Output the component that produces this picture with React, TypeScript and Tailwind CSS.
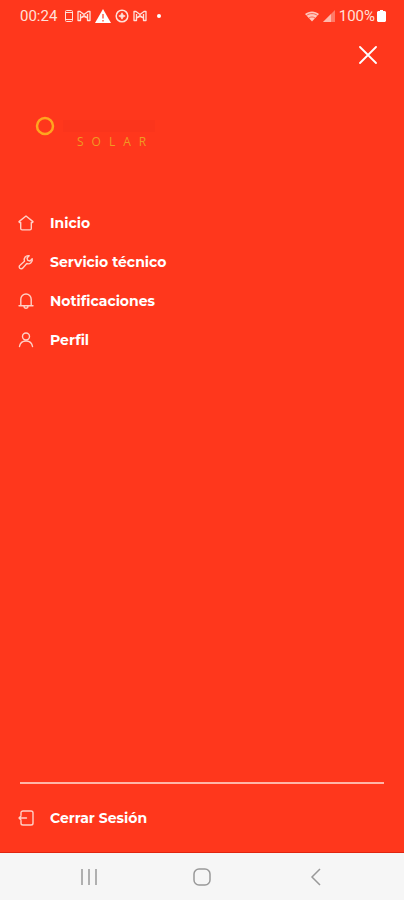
import type { ReactNode } from "react";

const menuItems = [
  { label: "Inicio", href: "#inicio", icon: <HomeIcon /> },
  { label: "Servicio técnico", href: "#servicio", icon: <WrenchIcon /> },
  { label: "Notificaciones", href: "#notificaciones", icon: <BellIcon /> },
  { label: "Perfil", href: "#perfil", icon: <UserIcon /> },
];

function LineIcon({ children }: { children: ReactNode }) {
  return (
    <svg
      viewBox="0 0 16 16"
      className="h-4 w-4 shrink-0 text-[#ffd0c6]"
      fill="none"
      stroke="currentColor"
      strokeWidth="1.4"
      strokeLinecap="round"
      strokeLinejoin="round"
      aria-hidden="true"
    >
      {children}
    </svg>
  );
}

function HomeIcon() {
  return (
    <LineIcon>
      <path d="M1 6.6 8 1l7 5.600-.4.9h-1.300v6c0 .9-.5 1.400-1.400 1.400H4.100c-.9 0-1.400-.5-1.400-1.400v-6H1.400z" />
    </LineIcon>
  );
}

function WrenchIcon() {
  return (
    <LineIcon>
      <path d="M11.200 1.800a4 4 0 0 0-4.700 5.400L2 11.200a2 2 0 1 0 2.800 2.800l4-4.500a4 4 0 0 0 5.400-4.700L12 7l-2.300-.7L9 4z" />
    </LineIcon>
  );
}

function BellIcon() {
  return (
    <LineIcon>
      <path d="M1 12.800h14M2.800 12.800V6.200a5.200 5.200 0 0 1 10.400 0v6.600M6 13.200c.2 2.700 3.800 2.700 4 0" />
    </LineIcon>
  );
}

function UserIcon() {
  return (
    <LineIcon>
      <circle cx="8" cy="4.500" r="3.500" />
      <path d="M1.500 14.500c.6-3.700 3-5.500 6.500-5.500s5.900 1.800 6.500 5.500" />
    </LineIcon>
  );
}

function LogoutIcon() {
  return (
    <LineIcon>
      <path d="M3 5V2.800C3 1.600 3.800 1 5 1h8c1.200 0 2 .6 2 1.800v10.400c0 1.200-.8 1.800-2 1.800H5c-1.200 0-2-.6-2-1.800V11" />
      <path d="M8.500 8H1M3 6 1 8l2 2" />
    </LineIcon>
  );
}

// Gmail style envelope
function MailIcon() {
  return (
    <svg viewBox="0 0 14 12" className="h-3 w-3.5" fill="none" stroke="currentColor" strokeWidth="1.3" strokeLinejoin="round" aria-hidden="true">
      <path d="M1 10.500v-9h2L7 4.500l4-3h2v9h-2.500V8L7 5.500 3.500 8v2.500z" />
      <path d="M3.500 4v4L7 6.500 10.500 8V4" />
    </svg>
  );
}

function StatusBar() {
  return (
    <div className="flex h-8 items-center justify-between pl-5 pr-[18px] text-[#ffe0d9]">
      <div className="flex items-center gap-1">
        <span className="mr-1 font-[Roboto,sans-serif] text-[15px]">00:24</span>
        <svg viewBox="0 0 8 12" className="h-3 w-2" fill="none" stroke="currentColor" aria-hidden="true">
          <rect x=".5" y=".5" width="7" height="11" rx="1" />
          <path d="M1 2.500h6M1 9.500h6" />
        </svg>
        <MailIcon />
        <svg viewBox="0 0 16 14" className="h-3.5 w-4 text-white" aria-hidden="true">
          <path d="M8 0 16 14H0z" fill="currentColor" />
          <path d="M8 5v4.500M8 11v1.500" stroke="#ff371c" strokeWidth="1.200" />
        </svg>
        <svg viewBox="0 0 14 14" className="h-3.5 w-3.5" fill="none" stroke="currentColor" strokeWidth="1.500" aria-hidden="true">
          <circle cx="7" cy="7" r="5.800" />
          <path d="M7 3.800 8 6l2.200 1L8 8l-1 2.200L6 8 3.800 7 6 6z" fill="currentColor" strokeWidth=".8" />
        </svg>
        <MailIcon />
        <span className="ml-1.5 h-1 w-1 rounded-full bg-white" />
      </div>
      <div className="flex items-center gap-1">
        <svg viewBox="0 0 14 11" className="h-3 w-3.5" aria-hidden="true">
          <path d="M0 3.500C4 0 10 0 14 3.500L7 11z" fill="currentColor" opacity=".85" />
          <path d="M1.500 5c3-2.500 8-2.500 11 0M4 7.500c1.800-1.400 4.200-1.400 6 0" fill="none" stroke="#ff371c" strokeWidth=".7" />
        </svg>
        <svg viewBox="0 0 12 12" className="h-3 w-3" fill="currentColor" aria-hidden="true">
          <path d="M0 12 12 0v12z" opacity=".4" />
          <path d="M0 12 8 4v8z" opacity=".6" />
        </svg>
        <div className="flex items-center gap-0.5">
          <span className="font-[Roboto,sans-serif] text-[15px]">100%</span>
          <svg viewBox="0 0 9 12" className="h-3 w-[9px] text-white" fill="currentColor" aria-hidden="true">
            <path d="M3 0h3v1h2l1 1v9l-1 1H1l-1-1V2l1-1h2z" />
          </svg>
        </div>
      </div>
    </div>
  );
}

function Logo() {
  return (
    <div className="flex gap-2 px-[35px]">
      <svg viewBox="0 0 20 20" className="h-5 w-5" fill="none" stroke="#ffa51f" strokeWidth="2.500" aria-hidden="true">
        <circle cx="10" cy="10" r="8" />
      </svg>
      <div>
        {/* tone-on-tone band above the name */}
        <div className="flex h-5 items-center">
          <div className="h-3 w-[92px] bg-[#fb351c]" />
        </div>
        <p className="pl-3.5 font-['Open_Sans',sans-serif] text-xs leading-3 tracking-[8px] text-[#f09a22]">SOLAR</p>
      </div>
    </div>
  );
}

export default function App() {
  return (
    <div className="flex min-h-screen flex-col bg-[#ff371c] font-[Montserrat,Inter,sans-serif] text-white">
      <StatusBar />
      <header className="flex flex-col">
        <button type="button" aria-label="Cerrar menú" className="mr-[23px] mt-2.5 self-end p-1">
          <svg viewBox="0 0 18 18" className="h-[18px] w-[18px]" fill="none" stroke="currentColor" strokeWidth="1.800" strokeLinecap="round" aria-hidden="true">
            <path d="m1 1 16 16M17 1 1 17" />
          </svg>
        </button>
        <div className="pt-12">
          <Logo />
        </div>
      </header>

      <nav className="mt-[65px] flex flex-1 flex-col gap-[19px] px-[18px]">
        {menuItems.map((item) => (
          <a key={item.label} href={item.href} className="flex items-center gap-4 text-sm font-bold">
            {item.icon}
            {item.label}
          </a>
        ))}
      </nav>

      <footer>
        <hr className="mx-5 border-t-2 border-[#ffb5a7]" />
        <button type="button" className="flex w-full items-center gap-4 px-[18px] py-6 text-sm font-bold">
          <LogoutIcon />
          Cerrar Sesión
        </button>
        <div className="flex h-12 items-center justify-around border-t border-[#e02510] bg-[#f6f6f6] px-8 text-[#999]">
          <button type="button" aria-label="Recientes">
            <svg viewBox="0 0 18 18" className="h-[18px] w-[18px]" stroke="currentColor" strokeWidth="1.500" aria-hidden="true">
              <path d="M2 1v16M9 1v16M16 1v16" />
            </svg>
          </button>
          <button type="button" aria-label="Inicio">
            <svg viewBox="0 0 18 18" className="h-[18px] w-[18px]" fill="none" stroke="currentColor" strokeWidth="1.500" aria-hidden="true">
              <rect x="1" y="1" width="16" height="16" rx="5" />
            </svg>
          </button>
          <button type="button" aria-label="Atrás">
            <svg viewBox="0 0 18 18" className="h-[18px] w-[18px]" fill="none" stroke="currentColor" strokeWidth="1.500" aria-hidden="true">
              <path d="m14 1-8 8 8 8" />
            </svg>
          </button>
        </div>
      </footer>
    </div>
  );
}
